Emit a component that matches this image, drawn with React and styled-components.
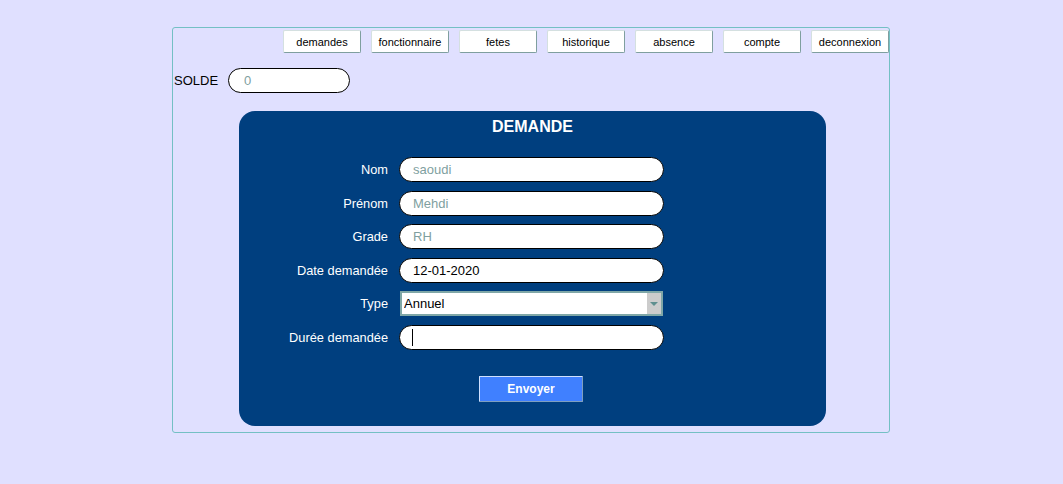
import React from "react";
import styled, { createGlobalStyle } from "styled-components";

const Global = createGlobalStyle`
  html, body { margin: 0; padding: 0; background: #e0e0ff; }
  body { font-family: "Liberation Sans", Arial, sans-serif; }
  * { box-sizing: border-box; }
`;

const Frame = styled.div`
  margin: 27px 0 0 172px;
  width: 718px;
  height: 406px;
  border: 1px solid #74c0c4;
  border-radius: 3px;
  display: flex;
  flex-direction: column;
`;

const Nav = styled.nav`
  display: flex;
  justify-content: flex-end;
  gap: 10px;
  margin-top: 2px;
`;

const NavButton = styled.button`
  width: 78px;
  height: 23px;
  background: #ffffff;
  border: 1px solid;
  border-color: #d4e0e0 #7f9f9f #7f9f9f #d4e0e0;
  border-radius: 2px;
  font-family: "Liberation Sans", Arial, sans-serif;
  font-size: 11px;
  color: #000;
  padding: 0;
  cursor: pointer;
`;

const SoldeRow = styled.div`
  display: flex;
  align-items: center;
  gap: 10px;
  margin: 15px 0 0 1px;
`;

const SoldeLabel = styled.span`
  font-size: 13px;
  color: #000;
`;

const Pill = styled.input`
  width: ${(p) => p.$w || 265}px;
  height: 25px;
  border: 1px solid #000;
  border-radius: 13px;
  background: #fff;
  padding: 0 0 0 ${(p) => p.$pad || 13}px;
  font-family: "Liberation Sans", Arial, sans-serif;
  font-size: 13px;
  color: ${(p) => (p.$muted ? "#7f9f9f" : "#000")};
  outline: none;
  &::placeholder { color: #7f9f9f; }
`;

const Panel = styled.section`
  margin: 18px 0 0 66px;
  width: 587px;
  height: 315px;
  background: #003f7f;
  border-radius: 16px;
  display: flex;
  flex-direction: column;
  align-items: center;
  padding-top: 6px;
`;

const Title = styled.h2`
  margin: 0;
  font-size: 16px;
  line-height: 20px;
  font-weight: bold;
  color: #fff;
`;

const Form = styled.div`
  align-self: flex-start;
  margin-top: 20px;
  display: grid;
  grid-template-columns: 149px 265px;
  column-gap: 11px;
  row-gap: 8.6px;
  align-items: center;
`;

const Label = styled.label`
  text-align: right;
  color: #fff;
  font-size: 12.8px;
`;

const SelectWrap = styled.div`
  position: relative;
  width: 263px;
  margin-left: 1px;
  height: 25px;
`;

const Select = styled.select`
  appearance: none;
  width: 100%;
  height: 100%;
  border: 2px solid #7fa7a7;
  border-radius: 0;
  background: #fff;
  padding: 0 0 0 2px;
  font-family: "Liberation Sans", Arial, sans-serif;
  font-size: 13px;
  color: #000;
  outline: none;
`;

const Arrow = styled.span`
  position: absolute;
  right: 2px;
  top: 2px;
  bottom: 2px;
  width: 14px;
  background: #cccccc;
  display: flex;
  align-items: center;
  justify-content: center;
  pointer-events: none;
  &::after {
    content: "";
    border-left: 4px solid transparent;
    border-right: 4px solid transparent;
    border-top: 4px solid #5f8f8f;
  }
`;

const FieldWrap = styled.div`
  position: relative;
`;

const Caret = styled.span`
  position: absolute;
  left: 13px;
  top: 4px;
  width: 1px;
  height: 17px;
  background: #000;
`;

const Submit = styled.button`
  margin-top: 26px;
  margin-left: -3px;
  width: 104px;
  height: 26px;
  background: #4080ff;
  border: 1px solid;
  border-color: #d0e0ff #7f9fbf #7f9fbf #d0e0ff;
  border-radius: 1px;
  color: #fff;
  font-family: "Liberation Sans", Arial, sans-serif;
  font-size: 12px;
  font-weight: bold;
  cursor: pointer;
`;

const navItems = ["demandes", "fonctionnaire", "fetes", "historique", "absence", "compte", "deconnexion"];

export default function App() {
  return (
    <>
      <Global />
      <Frame>
        <Nav>
          {navItems.map((n) => (
            <NavButton key={n}>{n}</NavButton>
          ))}
        </Nav>
        <SoldeRow>
          <SoldeLabel>SOLDE</SoldeLabel>
          <Pill $w={122} $pad={15} $muted readOnly value="0" />
        </SoldeRow>
        <Panel>
          <Title>DEMANDE</Title>
          <Form>
            <Label>Nom</Label>
            <Pill $muted readOnly value="saoudi" />
            <Label>Prénom</Label>
            <Pill $muted readOnly value="Mehdi" />
            <Label>Grade</Label>
            <Pill $muted readOnly value="RH" />
            <Label>Date demandée</Label>
            <Pill readOnly value="12-01-2020" />
            <Label>Type</Label>
            <SelectWrap>
              <Select defaultValue="Annuel">
                <option>Annuel</option>
                <option>Maladie</option>
                <option>Exceptionnel</option>
              </Select>
              <Arrow />
            </SelectWrap>
            <Label>Durée demandée</Label>
            <FieldWrap>
              <Pill defaultValue="" />
              <Caret />
            </FieldWrap>
          </Form>
          <Submit>Envoyer</Submit>
        </Panel>
      </Frame>
    </>
  );
}
